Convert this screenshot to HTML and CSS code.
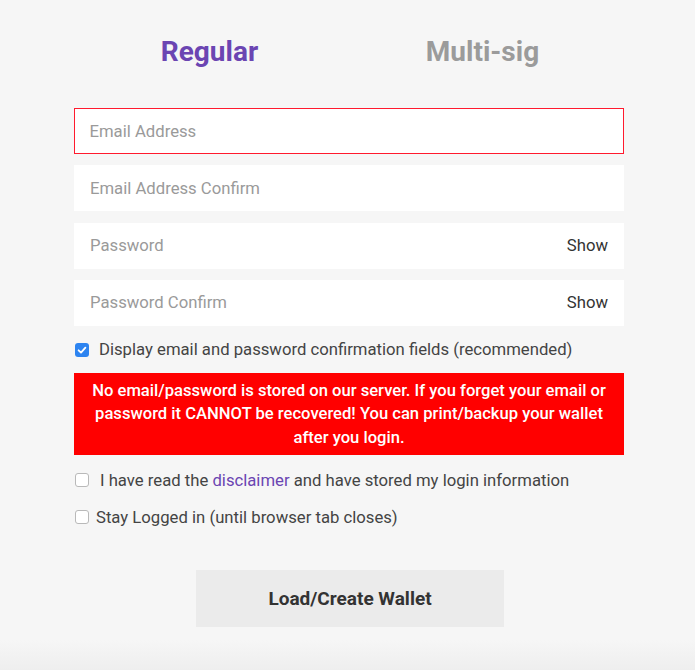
FILE: index.html
```html
<!DOCTYPE html>
<html>
<head>
<meta charset="utf-8">
<link rel="stylesheet" href="styles.css">
</head>
<body>
<div class="page">
  <div class="form">
    <div class="tabs">
      <div class="tab active">Regular</div>
      <div class="tab">Multi-sig</div>
    </div>
    <div class="field error"><span class="ph">Email Address</span></div>
    <div class="field"><span class="ph">Email Address Confirm</span></div>
    <div class="field"><span class="ph">Password</span><span class="show">Show</span></div>
    <div class="field"><span class="ph">Password Confirm</span><span class="show">Show</span></div>
    <label class="check first"><span class="box checked"><svg viewBox="0 0 14 14" width="14" height="14"><rect x="0" y="0" width="14" height="14" rx="3" fill="#2d84f0"/><path d="M3.6 7.3 L6 9.6 L10.4 4.6" fill="none" stroke="#fff" stroke-width="1.8" stroke-linecap="round" stroke-linejoin="round"/></svg></span><span class="label-text">Display email and password confirmation fields (recommended)</span></label>
    <div class="warning">No email/password is stored on our server. If you forget your email or password it CANNOT be recovered! You can print/backup your wallet after you login.</div>
    <label class="check disc"><span class="box"></span><span class="label-text">I have read the <a class="link">disclaimer</a> and have stored my login information</span></label>
    <label class="check tight"><span class="box"></span><span class="label-text">Stay Logged in (until browser tab closes)</span></label>
    <div class="btn-wrap"><div class="btn">Load/Create Wallet</div></div>
  </div>
</div>
</body>
</html>
```

FILE: styles.css
```css
html, body {
  margin: 0;
  padding: 0;
}
body {
  background: linear-gradient(#f6f6f6 0, #f6f6f6 640px, #eeeeee 670px);
  font-family: Roboto, "Liberation Sans", sans-serif;
  height: 670px;
  overflow: hidden;
}
.page {
  display: flex;
  justify-content: center;
  padding-left: 3px;
}
.form {
  width: 550px;
  display: flex;
  flex-direction: column;
}
.tabs {
  display: flex;
  padding-top: 32px;
  height: 76px;
  box-sizing: border-box;
  margin-left: 1px;
  margin-right: -1px;
}
.tab {
  flex: 1;
  text-align: center;
  font-size: 28px;
  font-weight: 700;
  color: #9b9b9b;
  line-height: 40px;
}
.tab.active {
  color: #6b45b2;
  padding-right: 4px;
}
.tab + .tab {
  padding-right: 8px;
}
.field {
  background: #fff;
  height: 46px;
  box-sizing: border-box;
  display: flex;
  align-items: center;
  justify-content: space-between;
  padding: 0 16px;
  margin-top: 11.3px;
  font-size: 16.7px;
}
.field.error {
  border: 1.5px solid #ff1a2e;
  padding: 0 14.5px;
}
.tabs + .field {
  margin-top: 32px;
}
.ph {
  color: #9a9a9a;
}
.show {
  color: #333;
}
.check {
  display: flex;
  align-items: center;
  font-size: 16.7px;
  color: #444;
  margin-top: 13px;
  height: 22px;
}
.box {
  width: 12px;
  height: 12px;
  border: 1px solid #b9b9b9;
  border-radius: 3px;
  background: #fff;
  margin-left: 1px;
  margin-right: 11px;
  flex: none;
}
.box.checked {
  border: none;
  width: 14px;
  height: 14px;
  display: flex;
  margin-right: 10px;
}
.check.tight .box {
  margin-right: 7px;
}
.link {
  color: #6b45b2;
}
.warning {
  background: #ff0000;
  color: #fff;
  font-size: 16.6px;
  font-weight: 500;
  text-align: center;
  line-height: 23.5px;
  padding: 6px 12px;
  margin-top: 12px;
}
.check.disc {
  margin-top: 14px;
}
.check + .check.tight {
  margin-top: 15px;
}
.btn-wrap {
  display: flex;
  justify-content: center;
  margin-top: 42px;
  padding-left: 2px;
}
.btn {
  width: 308px;
  height: 57px;
  background: #ebebeb;
  color: #333;
  font-size: 19px;
  font-weight: 700;
  display: flex;
  align-items: center;
  justify-content: center;
}
```
